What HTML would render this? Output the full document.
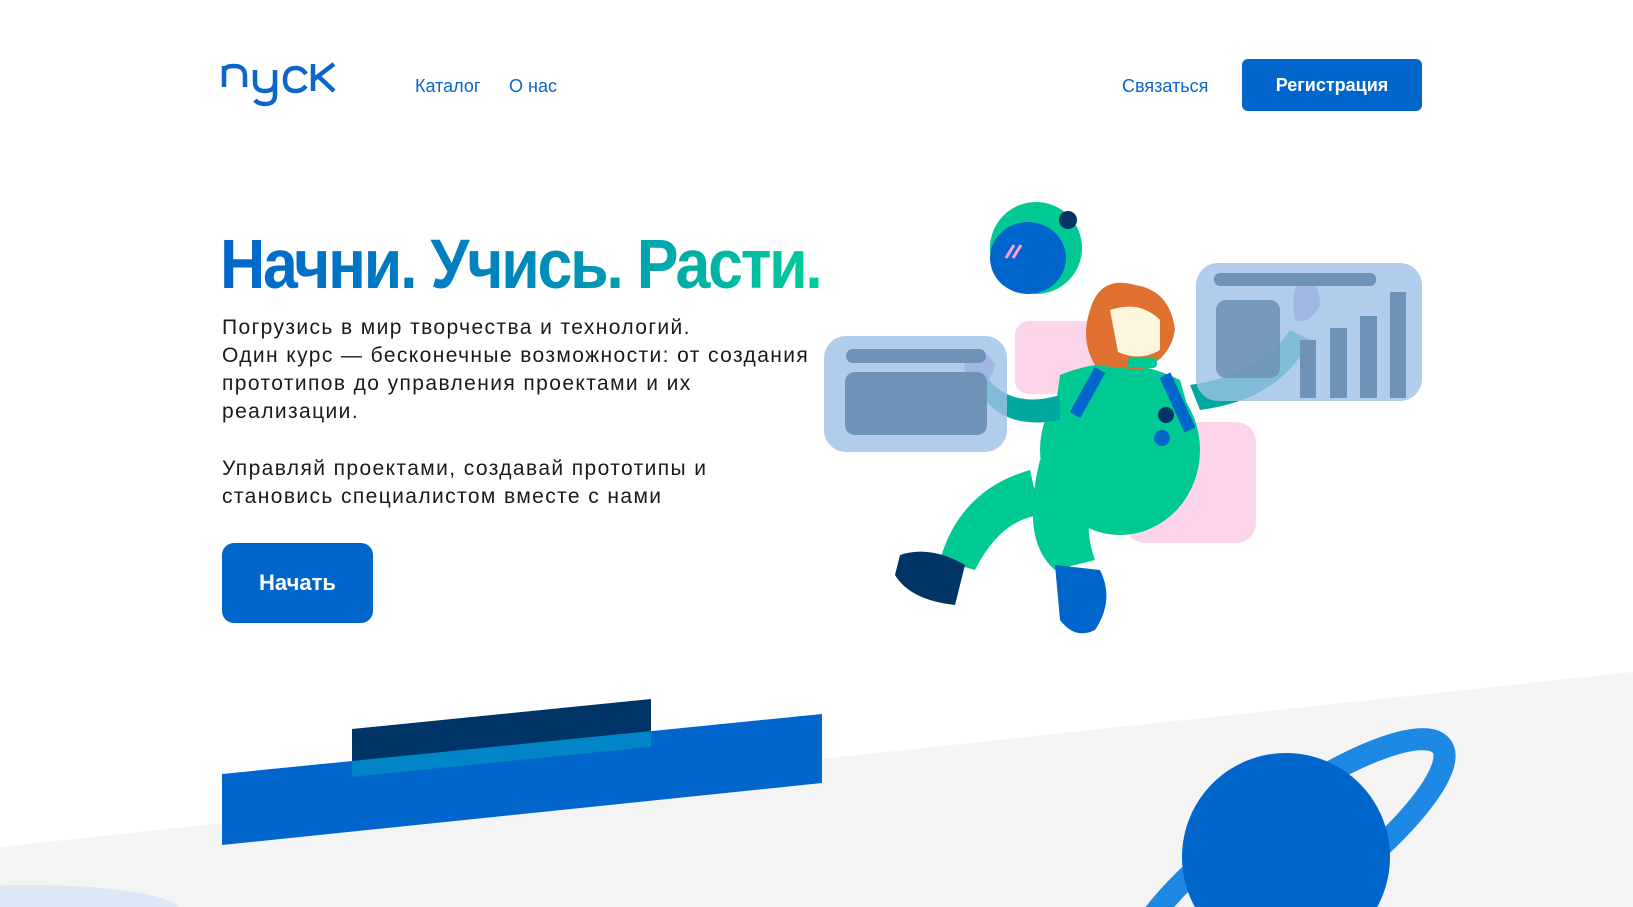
<!DOCTYPE html>
<html style="overflow:hidden"><head><meta charset="utf-8"><style>
*{margin:0;padding:0;box-sizing:border-box}
html,body{width:1633px;height:907px;overflow:hidden}
body{background:#fff;font-family:"Liberation Sans","DejaVu Sans",sans-serif;position:relative}
.a{position:absolute}
.nav{color:#0a66c8;font-size:18px;top:76px}
.btn{background:#0066cc;color:#fff;border-radius:6px;font-weight:bold;display:flex;align-items:center;justify-content:center}
h1{position:absolute;left:220px;top:224px;font-size:70px;font-weight:bold;letter-spacing:-2.5px;white-space:nowrap;background:linear-gradient(90deg,#0066cc 0%,#0088bb 50%,#00cc99 100%);-webkit-background-clip:text;background-clip:text;color:transparent;transform-origin:left;transform:scaleX(0.895)}
.p{left:222px;font-size:21px;line-height:28px;color:#1a1a1a;letter-spacing:1.4px;white-space:nowrap}
</style></head><body>
<svg class="a" style="left:0;top:0" width="1633" height="907">
<polygon points="0,847 1633,672 1633,907 0,907" fill="#f4f4f4"/>
<ellipse cx="30" cy="910" rx="150" ry="25" fill="#dbe8f6"/>
<polygon points="222,774 822,714 822,783 222,845" fill="#0066cc"/>
<polygon points="352,729 651,699 651,747 352,777" fill="#003366"/>
<polygon points="352,761 651,731 651,747 352,777" fill="#0085c9"/>
<ellipse cx="1288" cy="858" rx="190" ry="50" transform="rotate(-36 1288 858)" fill="none" stroke="#1e88e5" stroke-width="22"/>
<circle cx="1286" cy="857" r="104" fill="#0066cc"/>
<rect x="1015" y="321" width="90" height="73" rx="14" fill="#fdd5ea"/>
<rect x="1125" y="422" width="131" height="121" rx="20" fill="#fdd5ea"/>
<ellipse cx="1036" cy="248" rx="46" ry="46" fill="#00c994"/>
<ellipse cx="1028" cy="258" rx="38" ry="36" fill="#0066cc"/>
<circle cx="1068" cy="220" r="9" fill="#003366"/>
<path d="M1006 258 L1014 245 M1013 258 L1021 245" stroke="#ff9ed0" stroke-width="3"/>
<path d="M1030 470 Q960 490 940 560 L975 570 Q1000 520 1040 515 Z" fill="#00c994"/>
<path d="M1040 460 Q1020 540 1055 570 L1095 560 Q1080 520 1100 480 Z" fill="#00c994"/>
<path d="M900 555 Q930 545 965 565 L955 605 Q910 600 895 575 Z" fill="#003366"/>
<path d="M1055 565 L1100 570 Q1115 600 1095 630 Q1075 640 1060 620 Z" fill="#0066cc"/>
<ellipse cx="1120" cy="450" rx="80" ry="85" fill="#00c994"/>
<path d="M1060 375 Q1120 350 1180 380 L1200 450 L1050 450 Z" fill="#00c994"/>
<path d="M1100 370 L1075 415" stroke="#0066cc" stroke-width="12"/>
<path d="M1165 375 L1190 430" stroke="#0066cc" stroke-width="12"/>
<circle cx="1166" cy="415" r="8" fill="#003366"/>
<circle cx="1162" cy="438" r="8" fill="#0066cc"/>
<path d="M1060 420 Q1010 430 985 400 L965 385 L985 375 Q1010 410 1060 395 Z" fill="#00a99f"/>
<path d="M1190 385 Q1260 375 1290 330 L1310 340 Q1280 400 1200 410 Z" fill="#00a99f"/>
<path d="M1090 310 Q1100 275 1135 285 Q1170 290 1175 330 Q1170 360 1140 370 L1095 365 Q1080 340 1090 310 Z" fill="#e07030"/>
<path d="M1110 310 Q1140 300 1160 320 L1160 350 Q1140 362 1118 352 Z" fill="#fdf6df"/>
<rect x="1127" y="358" width="30" height="10" rx="4" fill="#00c994"/>
<path d="M965 355 Q985 345 995 365 Q990 385 975 390 Q962 385 965 355Z" fill="#9b7dd0" opacity=".9"/>
<path d="M1300 275 Q1320 280 1320 305 Q1310 325 1295 320 Q1290 295 1300 275Z" fill="#9b7dd0" opacity=".9"/>
<rect x="824" y="336" width="183" height="116" rx="22" fill="#9fc0e6" opacity=".8"/>
<rect x="846" y="349" width="140" height="14" rx="7" fill="#6f93b8"/>
<rect x="845" y="372" width="142" height="63" rx="10" fill="#6f93b8"/>
<rect x="1196" y="263" width="226" height="138" rx="22" fill="#9fc0e6" opacity=".8"/>
<rect x="1214" y="273" width="162" height="13" rx="6" fill="#6f93b8"/>
<rect x="1216" y="300" width="64" height="78" rx="10" fill="#6f93b8" opacity=".9"/>
<rect x="1300" y="340" width="16" height="58" fill="#6f93b8"/>
<rect x="1330" y="328" width="17" height="70" fill="#6f93b8"/>
<rect x="1360" y="316" width="17" height="82" fill="#6f93b8"/>
<rect x="1390" y="292" width="16" height="106" fill="#6f93b8"/>
<g fill="none" stroke="#0a66c8" stroke-width="4.5">
<path d="M224 66 L224 87 M224 72 Q224 66 234 66 Q245 66 245 76 L245 87"/>
<path d="M255 70 L255 82 Q255 91 265 91 Q275 91 275 82 L275 70 M275 82 L275 95 Q275 104 265 104 Q258 104 255 100"/>
<path d="M306 74 Q302 68 296 68 Q285 68 285 80 Q285 91 296 91 Q302 91 306 86"/>
<path d="M313 64 L313 91 M313 80 L334 64 M318 76 L334 91"/>
</g>
</svg>
<div class="a nav" style="left:415px">Каталог</div>
<div class="a nav" style="left:509px">О нас</div>
<div class="a nav" style="left:1122px">Связаться</div>
<div class="a btn" style="left:1242px;top:59px;width:180px;height:52px;font-size:18px">Регистрация</div>
<h1>Начни. Учись. Расти.</h1>
<div class="a p" style="top:314px">Погрузись в мир творчества и технологий.<br>Один курс — бесконечные возможности: от создания<br>прототипов до управления проектами и их<br>реализации.</div>
<div class="a p" style="top:455px">Управляй проектами, создавай прототипы и<br>становись специалистом вместе с нами</div>
<div class="a btn" style="left:222px;top:543px;width:151px;height:80px;border-radius:12px;font-size:22px">Начать</div>
</body></html>
